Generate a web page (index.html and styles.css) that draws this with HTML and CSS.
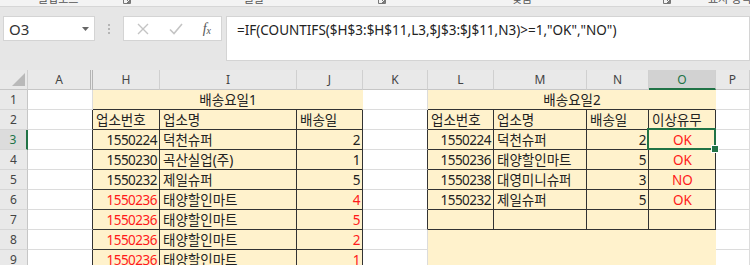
FILE: index.html
```html
<!DOCTYPE html>
<html lang="ko">
<head>
<meta charset="UTF-8">
<title>배송요일 비교</title>
<link rel="stylesheet" href="styles.css">
</head>
<body>
<div class="ribbon">
  <span>클립보드</span>
  <span><svg class="launch" width="8" height="8" viewBox="0 0 8 8"><path d="M0.5 0.5h7v7h-7z M3 3l3.5 3.5 M6.5 4v2.5h-2.5" fill="none" stroke="#777" stroke-width="1"/></svg></span>
  <span>글꼴</span>
  <span><svg class="launch" width="8" height="8" viewBox="0 0 8 8"><path d="M0.5 0.5h7v7h-7z M3 3l3.5 3.5 M6.5 4v2.5h-2.5" fill="none" stroke="#777" stroke-width="1"/></svg></span>
  <span>맞춤</span>
  <span><svg class="launch" width="8" height="8" viewBox="0 0 8 8"><path d="M0.5 0.5h7v7h-7z M3 3l3.5 3.5 M6.5 4v2.5h-2.5" fill="none" stroke="#777" stroke-width="1"/></svg></span>
  <span>표시 형식</span>
</div>

<div class="fbar">
  <div class="namebox">
    <span>O3</span>
    <svg width="7" height="4" viewBox="0 0 7 4"><path d="M0 0h7l-3.5 4z" fill="#666"/></svg>
  </div>
  <div class="grip"><i></i><i></i><i></i></div>
  <div class="fbtns">
    <svg width="12" height="12" viewBox="0 0 12 12"><path d="M1 1l10 10M11 1L1 11" stroke="#c4c4c4" stroke-width="1.4" fill="none"/></svg>
    <svg width="14" height="12" viewBox="0 0 14 12"><path d="M1 6.5l4 4L13 1" stroke="#c4c4c4" stroke-width="1.6" fill="none"/></svg>
    <span class="fx">f<sub>x</sub></span>
  </div>
  <div class="formula">=IF(COUNTIFS($H$3:$H$11,L3,$J$3:$J$11,N3)&gt;=1,"OK","NO")</div>
</div>

<div class="sheet">
  <!-- column headers -->
  <div class="ch corner"><svg width="13" height="13" viewBox="0 0 13 13"><path d="M13 0v13H0z" fill="#b9b9b9"/></svg></div>
  <div class="ch hide">A</div>
  <div class="ch">H</div>
  <div class="ch">I</div>
  <div class="ch">J</div>
  <div class="ch">K</div>
  <div class="ch">L</div>
  <div class="ch">M</div>
  <div class="ch">N</div>
  <div class="ch on">O</div>
  <div class="ch">P</div>

  <!-- row 1 -->
  <div class="rh">1</div>
  <div class="c"></div>
  <div class="c f top span3">배송요일1</div>
  <div class="c"></div>
  <div class="c f top span4">배송요일2</div>
  <div class="c"></div>

  <!-- row 2 -->
  <div class="rh">2</div>
  <div class="c e"></div>
  <div class="c t">업소번호</div>
  <div class="c t">업소명</div>
  <div class="c t">배송일</div>
  <div class="c e"></div>
  <div class="c t">업소번호</div>
  <div class="c t">업소명</div>
  <div class="c t">배송일</div>
  <div class="c t">이상유무</div>
  <div class="c"></div>

  <!-- row 3 -->
  <div class="rh on">3</div>
  <div class="c e"></div>
  <div class="c t num">1550224</div>
  <div class="c t">덕천슈퍼</div>
  <div class="c t num">2</div>
  <div class="c e"></div>
  <div class="c t num">1550224</div>
  <div class="c t">덕천슈퍼</div>
  <div class="c t num">2</div>
  <div class="c t ctr red sel">OK</div>
  <div class="c"></div>

  <!-- row 4 -->
  <div class="rh">4</div>
  <div class="c e"></div>
  <div class="c t num">1550230</div>
  <div class="c t">곡산실업(주)</div>
  <div class="c t num">1</div>
  <div class="c e"></div>
  <div class="c t num">1550236</div>
  <div class="c t">태양할인마트</div>
  <div class="c t num">5</div>
  <div class="c t ctr red">OK</div>
  <div class="c"></div>

  <!-- row 5 -->
  <div class="rh">5</div>
  <div class="c e"></div>
  <div class="c t num">1550232</div>
  <div class="c t">제일슈퍼</div>
  <div class="c t num">5</div>
  <div class="c e"></div>
  <div class="c t num">1550238</div>
  <div class="c t">대영미니슈퍼</div>
  <div class="c t num">3</div>
  <div class="c t ctr red">NO</div>
  <div class="c"></div>

  <!-- row 6 -->
  <div class="rh">6</div>
  <div class="c e"></div>
  <div class="c t num red">1550236</div>
  <div class="c t">태양할인마트</div>
  <div class="c t num red">4</div>
  <div class="c e"></div>
  <div class="c t num">1550232</div>
  <div class="c t">제일슈퍼</div>
  <div class="c t num">5</div>
  <div class="c t ctr red">OK</div>
  <div class="c"></div>

  <!-- row 7 -->
  <div class="rh">7</div>
  <div class="c e"></div>
  <div class="c t num red">1550236</div>
  <div class="c t">태양할인마트</div>
  <div class="c t num red">5</div>
  <div class="c e"></div>
  <div class="c t"></div>
  <div class="c t"></div>
  <div class="c t"></div>
  <div class="c t"></div>
  <div class="c"></div>

  <!-- row 8 -->
  <div class="rh">8</div>
  <div class="c e"></div>
  <div class="c t num red">1550236</div>
  <div class="c t">태양할인마트</div>
  <div class="c t num red">2</div>
  <div class="c"></div>
  <div class="c f"></div>
  <div class="c f"></div>
  <div class="c f"></div>
  <div class="c f"></div>
  <div class="c"></div>

  <!-- row 9 -->
  <div class="rh">9</div>
  <div class="c e"></div>
  <div class="c t num red">1550236</div>
  <div class="c t">태양할인마트</div>
  <div class="c t num red">1</div>
  <div class="c"></div>
  <div class="c f"></div>
  <div class="c f"></div>
  <div class="c f"></div>
  <div class="c f"></div>
  <div class="c"></div>
</div>
</body>
</html>
```

FILE: styles.css
```css
* {box-sizing:border-box;}
body {
  margin:0;
  width:750px;
  height:265px;
  overflow:hidden;
  background:#e6e6e6;
  font-family:"Noto Sans", "Noto Sans CJK KR", sans-serif;
  color:#222;
}

/* ribbon remnants at the very top */
.ribbon {
  height:7px;
  background:#f3f3f3;
  border-bottom:1px solid #d6d6d6;
  overflow:hidden;
  display:grid;
  grid-template-columns:85px 121px 134px 134px 151px 45px 1fr;
  padding-left:38px;
  font-size:11px;
  color:#555;
}
.ribbon span {display:block; line-height:12px; margin-top:-7px; white-space:nowrap;}
.ribbon .launch {margin-top:3px;}

/* formula bar */
.fbar {display:flex; align-items:flex-start; height:63px; padding:9px 0 0 3px;}
.namebox {
  width:92px; height:25px;
  background:#fff; border:1px solid #d4d4d4;
  display:flex; align-items:center; justify-content:space-between;
  padding:0 5px 0 5px;
  font-size:15px; color:#333;
}
.grip {width:28px; height:25px; display:flex; flex-direction:column; align-items:center; justify-content:center; gap:2px;}
.grip i {width:2px; height:2px; background:#b5b5b5;}
.fbtns {
  width:99px; height:25px;
  background:#fff; border:1px solid #d4d4d4;
  display:flex; align-items:center; justify-content:space-between;
  padding:0 10px 0 13px;
}
.fx {font-family:"Liberation Serif", serif; font-style:italic; font-size:14px; color:#555;}
.fx sub {font-size:10px; vertical-align:-1px;}
.formula {
  flex:1; height:45px; margin-left:4px;
  background:#fff; border:1px solid #d4d4d4;
  padding:3px 0 0 10px;
  font-size:13.5px; line-height:20px; color:#222;
  white-space:nowrap; overflow:hidden;
}

/* worksheet grid */
.sheet {
  display:grid;
  grid-template-columns:28px 65px 67px 137px 66px 65px 66px 93px 62px 67px 1fr;
  grid-template-rows:20px repeat(9, 20px);
  background:#fff;
}
.ch, .rh {
  background:#e9e9e9;
  color:#444;
  font-size:12px;
  display:flex; align-items:center; justify-content:center;
}
.ch {border-right:1px solid #d0d0d0; border-bottom:1px solid #c6c6c6;}
.rh {border-right:1px solid #c6c6c6; border-bottom:1px solid #d6d6d6;}
.corner {justify-content:flex-end; align-items:flex-end; padding:0 2px 3px 0;}
.ch.hide {border-right:3px double #b4b4b4;}
.ch.on {background:#d2d2d2; color:#217346; border-bottom:2px solid #217346;}
.rh.on {background:#dcdcdc; color:#217346; border-right:2px solid #217346;}

.c {
  border-right:1px solid #dcdcdc;
  border-bottom:1px solid #dcdcdc;
  display:flex; align-items:flex-end;
  padding:0 2px 0 3px;
  font-size:13.5px; line-height:18px;
  white-space:nowrap; overflow:hidden;
  position:relative;
}
.f {background:#fff2cc; border-color:#fff2cc;}
.t {background:#fff2cc; border-color:#333;}
.e {border-right-color:#333;}
.top {border-bottom-color:#333; justify-content:center;}
.span3 {grid-column:span 3;}
.span4 {grid-column:span 4;}
.num {justify-content:flex-end; letter-spacing:-0.5px;}
.ctr {justify-content:center;}
.red {color:#ff1a1a;}

/* active cell */
.sel {overflow:visible;}
.sel::after {
  content:"";
  position:absolute;
  left:-2px; top:-2px; right:-1px; bottom:-1px;
  border:2px solid #217346;
}
.sel::before {
  content:"";
  position:absolute;
  right:-4px; bottom:-4px;
  width:6px; height:6px;
  background:#217346;
  border:1px solid #fff;
  z-index:1;
}
```
